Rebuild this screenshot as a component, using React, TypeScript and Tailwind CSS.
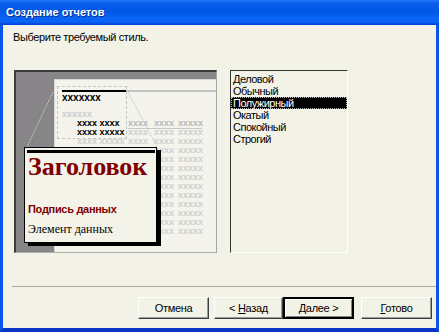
import React from "react";

const styles = ["Деловой", "Обычный", "Полужирный", "Окатый", "Спокойный", "Строгий"];

function XRow({ dark, head }: { dark?: boolean; head?: boolean }) {
  return (
    <div className="flex h-[9px] items-center text-[9px] font-bold leading-[9px]">
      <span className={`w-[51px] pl-[22px] box-content ${dark ? "text-black" : "text-[#cfcfcf]"}`}>
        {dark && head ? "xxxx xxxx" : "xxxx xxxxx"}
      </span>
      <div className={`flex ${head ? "text-[#b8b8b8] border-b border-[#c8c8c8]" : "text-[#d0d0d0]"}`}>
        <span className="w-[26px]">xxxx</span>
        <span className="w-[24px]">xxxx</span>
        <span className="w-[24px]">xxxxx</span>
      </div>
    </div>
  );
}

function Preview() {
  return (
    <div className="w-[203px] h-[183px] border-t-2 border-l-2 border-[#3c3c3c] border-r border-b border-r-[#a8a8a8] border-b-[#b0b0b0] bg-[#878587]">
      <div className="relative flex h-full flex-col pl-[38px] pt-[7px]">
        <div className="flex flex-1 flex-col border-l border-t border-[#d8d8d8] bg-[#f4f3ec]">
          <div className="mt-[10px] flex h-[2px]">
            <div className="ml-[7px] w-[64px] bg-black" />
            <div className="flex-1 bg-[#c4c4c4]" />
          </div>
          <div className="ml-[7px] mt-[2px] h-[8px] text-[10px] font-bold leading-[8px] text-black">xxxxxxx</div>
          <div className="ml-[7px] mt-[8px] h-[8px] text-[9px] font-bold leading-[8px] text-[#cccccc]">xxxxxx</div>
          <div className="mt-[1px] flex flex-col">
            <XRow dark head />
            <XRow dark />
            {Array.from({ length: 11 }).map((_, i) => (
              <XRow key={i} />
            ))}
          </div>
        </div>
        <div className="absolute left-[41px] top-[14px] h-[53px] w-[70px] border border-dashed border-[#c4c4c4]" />
        <svg className="absolute left-0 top-0" width="200" height="180">
          <line x1="37" y1="20" x2="11" y2="75" stroke="#c8c8c8" strokeDasharray="2 1" />
          <line x1="112" y1="20" x2="141" y2="75" stroke="#c8c8c8" strokeDasharray="2 1" />
        </svg>
        <div className="absolute left-[8px] top-[75px] flex h-[96px] w-[133px] flex-col border border-black bg-[#f4f3ea] shadow-[4px_3px_0_0_#000]">
          <div className="ml-[2px] mr-[1px] mt-[2px] h-[3px] bg-black" />
          <div className="ml-[3px] mt-[1px] text-[26px] font-bold leading-[25px] text-[#800000] font-['Liberation_Serif',serif]">
            Заголовок
          </div>
          <div className="ml-[3px] mt-[24px] text-[11px] font-bold leading-[13px] tracking-[-0.3px] text-[#800000]">
            Подпись данных
          </div>
          <div className="ml-[3px] mt-[6px] text-[12px] leading-[14px] text-black font-['Liberation_Serif',serif]">
            Элемент данных
          </div>
        </div>
      </div>
    </div>
  );
}

function Btn({ children, def, w = "w-[71px]" }: { children: React.ReactNode; def?: boolean; w?: string }) {
  return (
    <div
      className={`${w} flex h-[22px] items-center justify-center text-[11px] tracking-[-0.3px] text-black ${
        def
          ? "border-2 border-black shadow-[inset_1px_1px_0_#fff,inset_-1px_-1px_0_#808080]"
          : "border-l border-t border-white border-b border-r border-b-[#404040] border-r-[#404040] shadow-[inset_-1px_-1px_0_#9a9a9a]"
      }`}
    >
      <span>{children}</span>
    </div>
  );
}

export default function App() {
  return (
    <div className="flex h-[332px] w-[439px] flex-col font-['Liberation_Sans',Arial,sans-serif]">
      <div className="flex h-[25px] items-center bg-[linear-gradient(to_bottom,#2478fb_0%,#0a5ee9_12%,#0057e5_45%,#0a64f6_75%,#0a62f4_88%,#003ed4_100%)] pl-[6px] text-[11px] font-bold text-white [text-shadow:1px_1px_0_#0a2a8a]">
        Создание отчетов
      </div>
      <div className="flex flex-1 flex-col border-x-[3px] border-b-[4px] border-x-[#0a55ec] border-b-[#0a34c4] bg-[#f3f2e7]">
        <div className="ml-[10px] mt-[6px] h-[13px] text-[11px] leading-[13px] tracking-[-0.4px] text-black">
          Выберите требуемый стиль.
        </div>
        <div className="ml-[11px] mt-[26px] flex gap-[13px]">
          <Preview />
          <div className="flex h-[183px] w-[118px] flex-col border-l border-t border-[#333] border-b border-r border-b-white border-r-white pt-[2px]">
            {styles.map((s) => (
              <div
                key={s}
                className={`h-[12px] pl-[2px] text-[11px] leading-[12px] tracking-[-0.5px] ${
                  s === "Полужирный" ? "bg-black text-white outline outline-1 outline-dotted outline-[#bbb] -outline-offset-1" : "text-black"
                }`}
              >
                {s}
              </div>
            ))}
          </div>
        </div>
        <div className="ml-[9px] mt-[33px] h-px bg-[#aca899]" />
        <div className="mr-[4px] mt-[10px] flex justify-end">
          <Btn>Отмена</Btn>
          <div className="ml-[5px]">
            <Btn w="w-[69px]">
              &lt; <span className="underline">Н</span>азад
            </Btn>
          </div>
          <Btn def>
            <span className="underline">Д</span>алее &gt;
          </Btn>
          <div className="ml-[7px]">
            <Btn>
              <span className="underline">Г</span>отово
            </Btn>
          </div>
        </div>
      </div>
    </div>
  );
}
